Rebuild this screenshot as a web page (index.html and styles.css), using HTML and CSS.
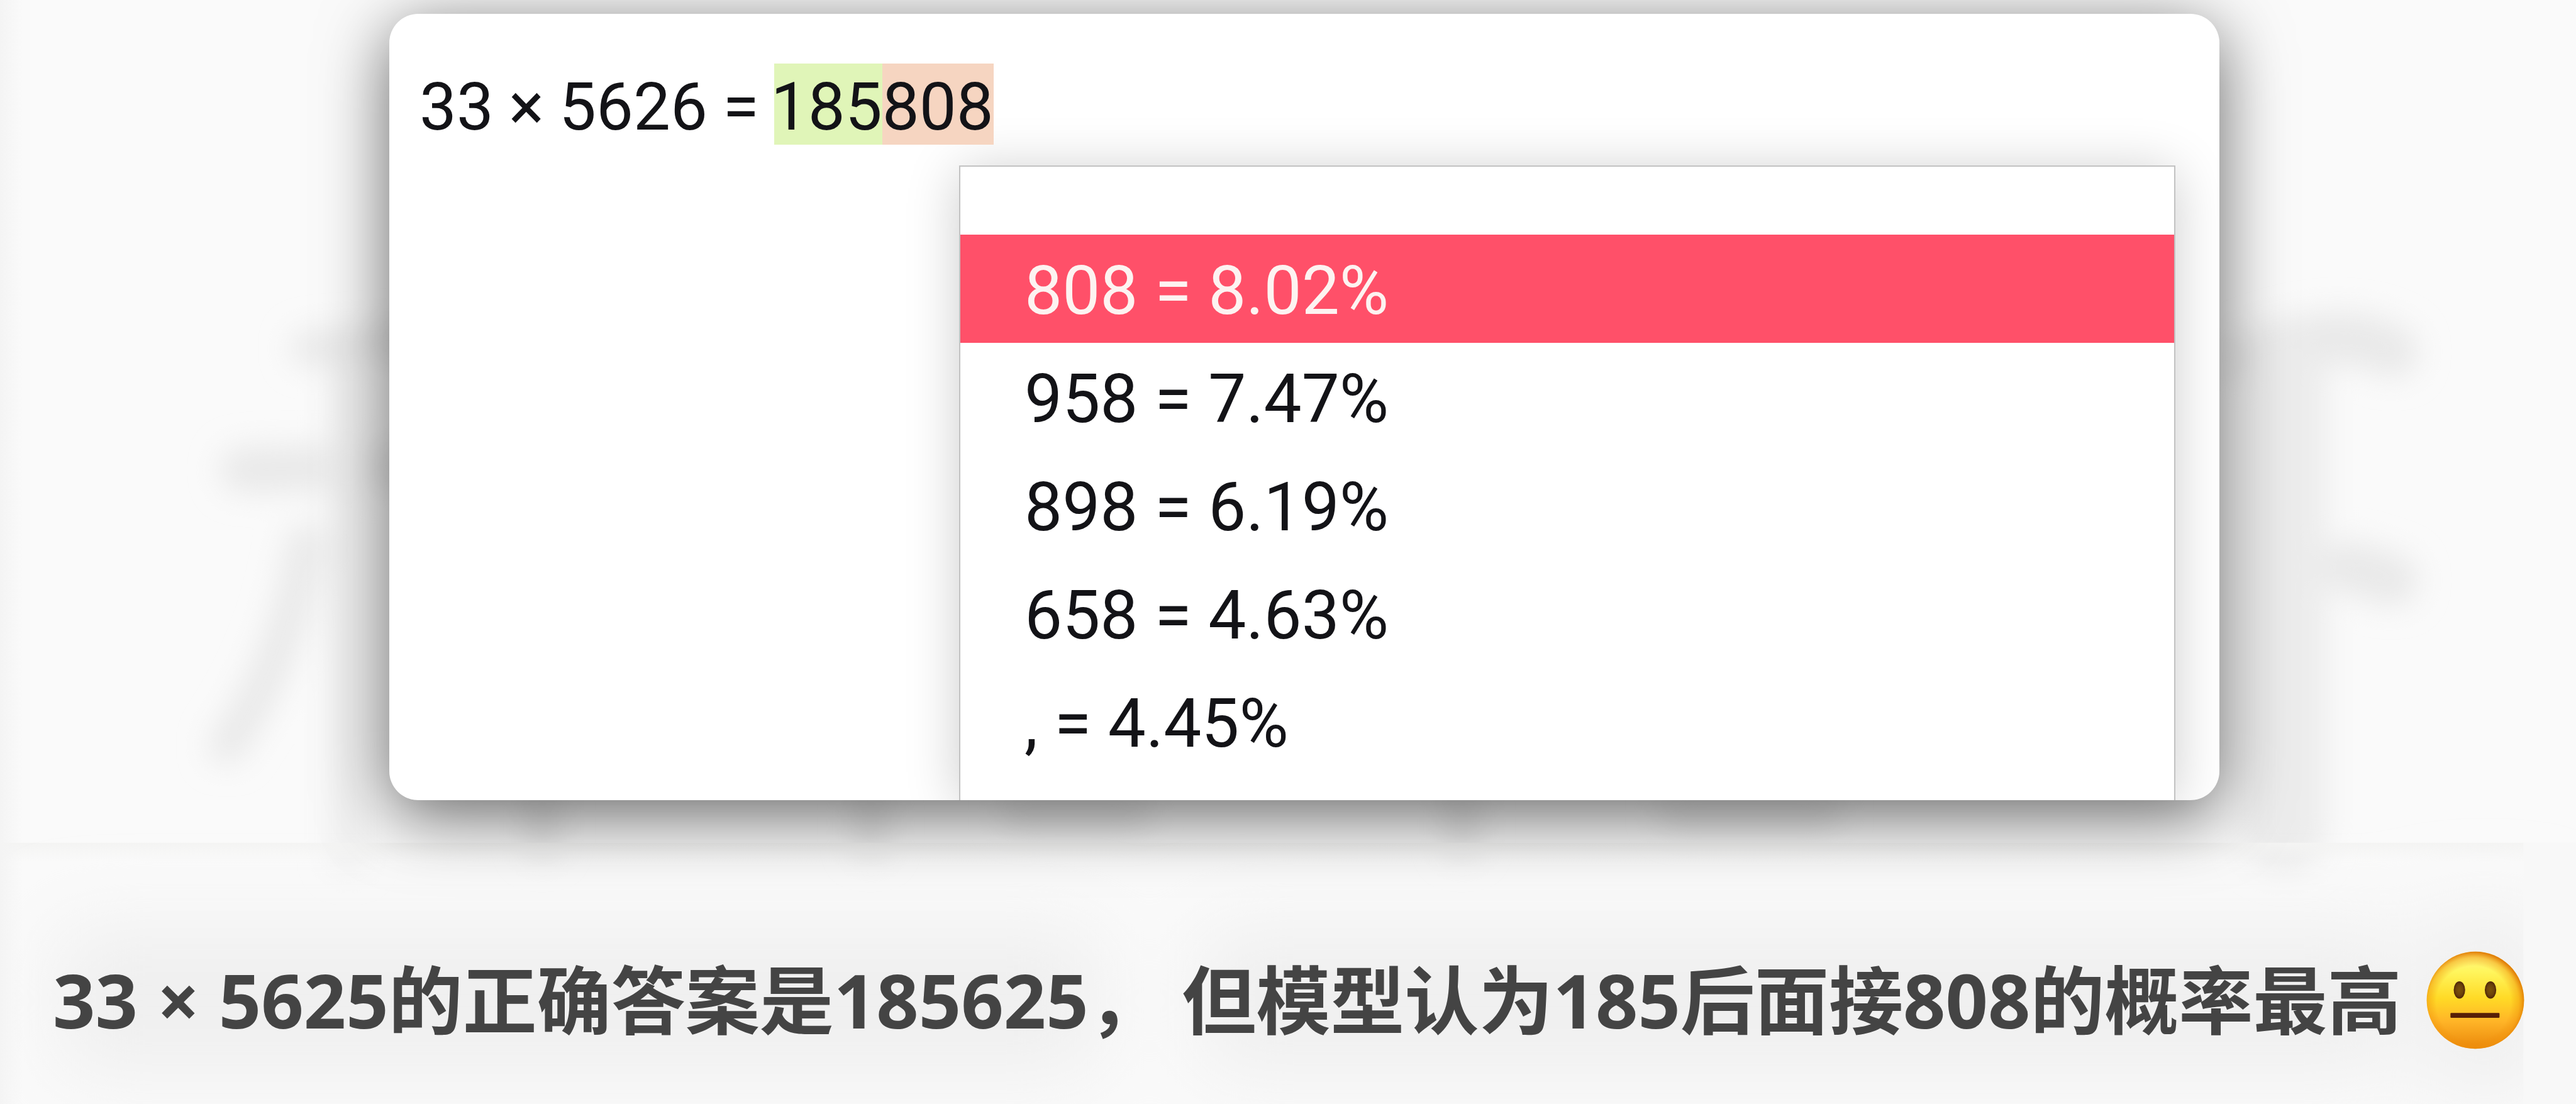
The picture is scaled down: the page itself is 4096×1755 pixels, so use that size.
FILE: index.html
```
<!DOCTYPE html>
<html lang="zh-CN">
<head>
<meta charset="utf-8">
<meta name="viewport" content="width=device-width, initial-scale=1">
<title>33 × 5626</title>
<link rel="stylesheet" href="styles.css">
</head>
<body>
<svg class="backdrop" viewBox="0 0 1568 672" preserveAspectRatio="none" aria-hidden="true">
  <defs>
    <filter id="soft" x="-20%" y="-20%" width="140%" height="140%"><feGaussianBlur stdDeviation="9"/></filter>
    <filter id="wide" x="-20%" y="-60%" width="140%" height="220%"><feGaussianBlur stdDeviation="24"/></filter>
    <linearGradient id="edge"><stop offset="0" stop-color="#f4f4f4"/><stop offset="1" stop-color="#f4f4f4" stop-opacity="0"/></linearGradient>
    <linearGradient id="seam" x2="0" y2="1"><stop offset="0" stop-color="#f4f4f3"/><stop offset="1" stop-color="#f4f4f3" stop-opacity="0"/></linearGradient>
  </defs>
  <rect width="1568" height="672" fill="#fafafa"/>
  <g filter="url(#soft)" fill="none" stroke="#e9e9e9" stroke-width="22" stroke-linecap="round">
    <path d="M188 212L260 206M186 330Q176 400 138 454"/>
    <path d="M148 286L235 284" stroke-width="28"/>
    <path d="M212 230V520" stroke="#f0f0f0"/>
    <path d="M1370 218Q1425 196 1456 214M1430 345L1456 353" stroke-width="32"/>
    <path d="M1390 230V505" stroke="#ececec" stroke-width="52"/>
    <path d="M330 490V512M530 490V512M620 495H690M890 490V512M1020 495H1110"/>
  </g>
  <rect y="513" width="1568" height="12" fill="url(#seam)"/>
  <g filter="url(#wide)" fill="#efefef">
    <rect x="35" y="565" width="635" height="88"/>
    <rect x="730" y="565" width="730" height="88"/>
    <rect x="1478" y="555" width="70" height="110"/>
  </g>
  <rect x="1536" y="513" width="32" height="159" fill="#f8f8f8"/>
  <rect width="14" height="672" fill="url(#edge)"/>
</svg>
<main class="page">
  <section class="card">
    <p class="equation">
      <span class="term">33</span> <span class="term">×</span> <span class="term">5626</span> <span class="term">=</span>
      <span class="result"><mark class="term token-known">185</mark><mark class="term token-next">808</mark></span>
    </p>
    <ul class="candidates">
      <li class="candidate selected">808 = 8.02%</li>
      <li class="candidate">958 = 7.47%</li>
      <li class="candidate">898 = 6.19%</li>
      <li class="candidate">658 = 4.63%</li>
      <li class="candidate">, = 4.45%</li>
    </ul>
  </section>
  <p class="caption">
    <span>33 × 5625的正确答案是185625， 但模型认为185后面接808的概率最高</span>
    <svg class="face" viewBox="0 0 240 240" role="img" aria-label="😐">
      <defs>
        <linearGradient id="skin" x2="0" y2="1">
          <stop offset="0" stop-color="#fff48a"/><stop offset=".2" stop-color="#fff65e"/>
          <stop offset=".48" stop-color="#ffda26"/><stop offset=".72" stop-color="#ffb427"/><stop offset="1" stop-color="#ea870a"/>
        </linearGradient>
        <radialGradient id="rim" cx=".48" cy=".53" r=".53">
          <stop offset=".72" stop-color="#ee8c08" stop-opacity="0"/><stop offset=".88" stop-color="#f0930c" stop-opacity=".45"/><stop offset="1" stop-color="#e07c06"/>
        </radialGradient>
        <radialGradient id="eye"><stop offset="0" stop-color="#7b5209"/><stop offset=".6" stop-color="#6d430b"/><stop offset="1" stop-color="#4f2509"/></radialGradient>
      </defs>
      <circle cx="120" cy="120" r="119" fill="url(#skin)"/>
      <circle cx="120" cy="120" r="119" fill="url(#rim)"/>
      <ellipse cx="81" cy="95" rx="14" ry="21" fill="url(#eye)"/>
      <ellipse cx="157" cy="95" rx="14" ry="21" fill="url(#eye)"/>
      <rect x="59" y="151" width="120" height="12" rx="2" fill="#571f07"/>
    </svg>
  </p>
</main>
</body>
</html>
```
FILE: styles.css
```
* {
  box-sizing: border-box;
}

body {
  margin: 0;
  min-height: 100vh;
  background: #fafafa;
  color: #131317;
  font-family: Roboto, "Liberation Sans", sans-serif;
  overflow: hidden;
}

.backdrop {
  position: absolute;
  inset: 0;
  width: 100%;
  height: 100%;
  z-index: -1;
}

.page {
  padding-top: 22px;
}

.card {
  margin: 0 567px 0 619px;
  padding: 79px 70px 0 48px;
  overflow: hidden;
  border-radius: 46px;
  background: #fff;
  box-shadow: 0 24px 110px rgba(0, 0, 0, .6);
}

.equation {
  display: flex;
  gap: 24px;
  margin: 0;
  font-size: 105px;
  line-height: 119px;
  white-space: nowrap;
}

.result {
  display: flex;
}

.term {
  display: flex;
  justify-content: flex-end;
  padding-top: 10px;
  color: inherit;
}

.token-known {
  width: 172px;
  background: #e0f5b8;
}

.token-next {
  background: #f6d5c1;
}

.candidates {
  margin: 33px 0 0 858px;
  padding: 108px 0 39px;
  border: 2px solid #c2c2c2;
  border-bottom: 0;
  background: #fff;
  box-shadow: 0 8px 80px rgba(0, 0, 0, .2);
  list-style: none;
  font-size: 107px;
  line-height: 164px;
}

.candidate {
  padding: 8px 0 0 102px;
  white-space: nowrap;
}

.selected {
  background: #ff5069;
  color: #fdf3f1;
}

.caption {
  display: flex;
  align-items: center;
  gap: 40px;
  margin: 234px 0 0;
  padding-left: 84px;
  color: #444;
  font-family: "Noto Sans", "Noto Sans CJK SC", sans-serif;
  font-size: 118px;
  font-weight: 700;
  line-height: 168px;
  white-space: nowrap;
}

.face {
  flex: none;
  width: 156px;
  height: 156px;
}
```
